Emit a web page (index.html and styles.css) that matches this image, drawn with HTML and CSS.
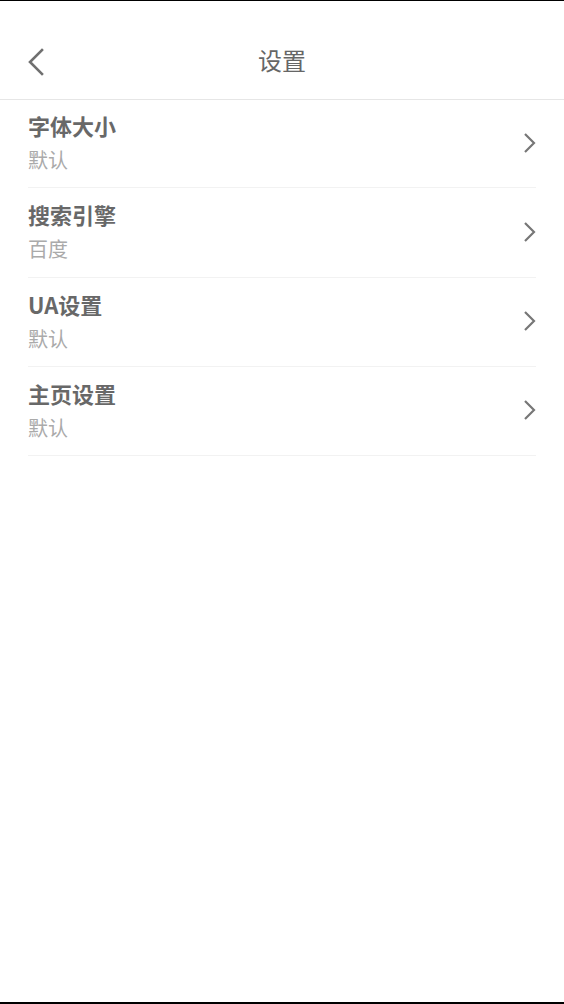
FILE: index.html
```html
<!DOCTYPE html>
<html lang="zh-CN">
<head>
  <meta charset="UTF-8">
  <meta name="viewport" content="width=device-width, initial-scale=1.0">
  <title>设置</title>
  <link rel="stylesheet" href="styles.css">
</head>
<body>
  <div class="page">
    <div class="header">
      <span class="back">
        <svg width="18" height="28" viewBox="0 0 18 28">
          <polyline points="15,2 3,14 15,26" fill="none" stroke="#707070" stroke-width="2.6" stroke-linecap="square"/>
        </svg>
      </span>
      <span class="title">设置</span>
    </div>

    <div class="list">
      <div class="item">
        <div class="text">
          <div class="name">字体大小</div>
          <div class="value">默认</div>
        </div>
        <svg class="arrow" width="14" height="22" viewBox="0 0 14 22">
          <polyline points="2,2 11,11 2,20" fill="none" stroke="#777" stroke-width="2.2"/>
        </svg>
      </div>
      <div class="item">
        <div class="text">
          <div class="name">搜索引擎</div>
          <div class="value">百度</div>
        </div>
        <svg class="arrow" width="14" height="22" viewBox="0 0 14 22">
          <polyline points="2,2 11,11 2,20" fill="none" stroke="#777" stroke-width="2.2"/>
        </svg>
      </div>
      <div class="item">
        <div class="text">
          <div class="name">UA设置</div>
          <div class="value">默认</div>
        </div>
        <svg class="arrow" width="14" height="22" viewBox="0 0 14 22">
          <polyline points="2,2 11,11 2,20" fill="none" stroke="#777" stroke-width="2.2"/>
        </svg>
      </div>
      <div class="item">
        <div class="text">
          <div class="name">主页设置</div>
          <div class="value">默认</div>
        </div>
        <svg class="arrow" width="14" height="22" viewBox="0 0 14 22">
          <polyline points="2,2 11,11 2,20" fill="none" stroke="#777" stroke-width="2.2"/>
        </svg>
      </div>
    </div>
  </div>
</body>
</html>
```

FILE: styles.css
```css
html, body {
  margin: 0;
  padding: 0;
}
body {
  font-family: "Noto Sans CJK SC", "Noto Sans", sans-serif;
  background: #fff;
}
.page {
  box-sizing: border-box;
  height: 1004px;
  border-top: 1px solid #000;
  border-bottom: 2px solid #000;
  background: #fff;
}
.header {
  position: relative;
  height: 98px;
  border-bottom: 1px solid #e6e6e6;
  display: flex;
  align-items: center;
  justify-content: center;
}
.back {
  position: absolute;
  left: 27px;
  top: 47px;
  display: flex;
}
.title {
  font-size: 24px;
  color: #666;
  line-height: 30px;
  margin-top: 19px;
}
.list {
  padding: 0 28px;
}
.item {
  display: flex;
  align-items: center;
  justify-content: space-between;
  padding: 11px 0 12.3px;
  border-bottom: 1px solid #f2f2f2;
}
.item:first-child {
  padding-top: 10px;
}
.name {
  font-size: 22px;
  font-weight: 700;
  color: #686868;
  line-height: 30px;
}
.value {
  font-size: 20px;
  color: #aaa;
  line-height: 30px;
  margin-top: 5px;
}
.arrow {
  margin-right: -1px;
}
```
